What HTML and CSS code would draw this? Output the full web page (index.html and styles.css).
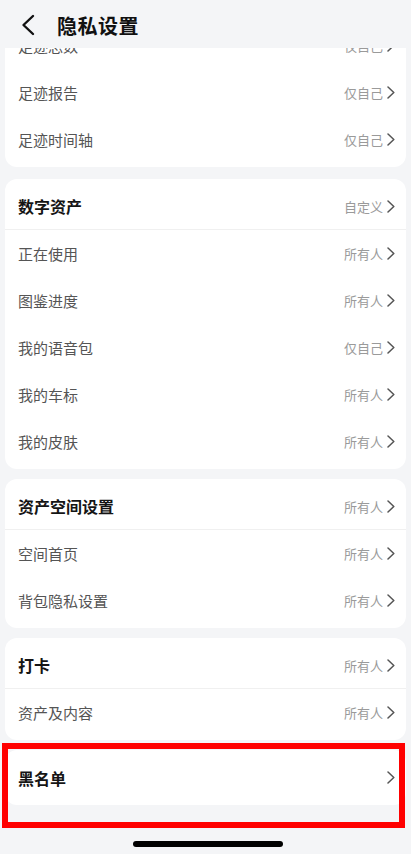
FILE: index.html
```html
<!DOCTYPE html>
<html lang="zh-CN">

<head>
  <meta charset="UTF-8">
  <meta name="viewport" content="width=device-width, initial-scale=1.0">
  <title>隐私设置</title>
  <link rel="stylesheet" href="styles.css">
</head>

<body>

  <header class="topbar">
    <svg class="back" width="16" height="22" viewBox="0 0 16 22">
      <path d="M13 2 L3.5 11 L13 20" fill="none" stroke="#111" stroke-width="2.4" stroke-linecap="round" stroke-linejoin="round"/>
    </svg>
    <h1>隐私设置</h1>
  </header>

  <main class="content">
    <section class="card first">
      <div class="row"><span class="label">足迹总数</span><span class="value">仅自己</span><svg class="arrow" viewBox="0 0 8 13"><path d="M1 1 L6.8 6.5 L1 12"/></svg></div>
      <div class="row"><span class="label">足迹报告</span><span class="value">仅自己</span><svg class="arrow" viewBox="0 0 8 13"><path d="M1 1 L6.8 6.5 L1 12"/></svg></div>
      <div class="row"><span class="label">足迹时间轴</span><span class="value">仅自己</span><svg class="arrow" viewBox="0 0 8 13"><path d="M1 1 L6.8 6.5 L1 12"/></svg></div>
    </section>

    <section class="card">
      <div class="row head"><span class="label">数字资产</span><span class="value">自定义</span><svg class="arrow" viewBox="0 0 8 13"><path d="M1 1 L6.8 6.5 L1 12"/></svg></div>
      <div class="row"><span class="label">正在使用</span><span class="value">所有人</span><svg class="arrow" viewBox="0 0 8 13"><path d="M1 1 L6.8 6.5 L1 12"/></svg></div>
      <div class="row"><span class="label">图鉴进度</span><span class="value">所有人</span><svg class="arrow" viewBox="0 0 8 13"><path d="M1 1 L6.8 6.5 L1 12"/></svg></div>
      <div class="row"><span class="label">我的语音包</span><span class="value">仅自己</span><svg class="arrow" viewBox="0 0 8 13"><path d="M1 1 L6.8 6.5 L1 12"/></svg></div>
      <div class="row"><span class="label">我的车标</span><span class="value">所有人</span><svg class="arrow" viewBox="0 0 8 13"><path d="M1 1 L6.8 6.5 L1 12"/></svg></div>
      <div class="row"><span class="label">我的皮肤</span><span class="value">所有人</span><svg class="arrow" viewBox="0 0 8 13"><path d="M1 1 L6.8 6.5 L1 12"/></svg></div>
    </section>

    <section class="card">
      <div class="row head"><span class="label">资产空间设置</span><span class="value">所有人</span><svg class="arrow" viewBox="0 0 8 13"><path d="M1 1 L6.8 6.5 L1 12"/></svg></div>
      <div class="row"><span class="label">空间首页</span><span class="value">所有人</span><svg class="arrow" viewBox="0 0 8 13"><path d="M1 1 L6.8 6.5 L1 12"/></svg></div>
      <div class="row"><span class="label">背包隐私设置</span><span class="value">所有人</span><svg class="arrow" viewBox="0 0 8 13"><path d="M1 1 L6.8 6.5 L1 12"/></svg></div>
    </section>

    <section class="card">
      <div class="row head"><span class="label">打卡</span><span class="value">所有人</span><svg class="arrow" viewBox="0 0 8 13"><path d="M1 1 L6.8 6.5 L1 12"/></svg></div>
      <div class="row"><span class="label">资产及内容</span><span class="value">所有人</span><svg class="arrow" viewBox="0 0 8 13"><path d="M1 1 L6.8 6.5 L1 12"/></svg></div>
    </section>

    <section class="card marked">
      <div class="row head"><span class="label">黑名单</span><svg class="arrow" viewBox="0 0 8 13"><path d="M1 1 L6.8 6.5 L1 12"/></svg></div>
    </section>
  </main>

  <div class="home-bar"></div>

</body>

</html>
```

FILE: styles.css
```css
* {
  box-sizing: border-box;
  margin: 0;
  padding: 0;
  font-family: "Noto Sans CJK SC", "Noto Sans", sans-serif;
}

body {
  background: #f4f5f7;
  width: 411px;
  height: 854px;
  overflow: hidden;
  position: relative;
}

.topbar {
  position: absolute;
  top: 0;
  left: 0;
  width: 100%;
  height: 48px;
  background: #f4f5f7;
  display: flex;
  align-items: center;
  padding: 2px 0 0 20px;
  z-index: 2;
}

.topbar .back {
  margin-right: 21px;
}

.topbar h1 {
  font-size: 20px;
  font-weight: 700;
  color: #111;
  letter-spacing: 0.5px;
}

.content {
  padding: 18px 5px 0;
  display: flex;
  flex-direction: column;
  gap: 10px;
}

.card {
  background: #fff;
  border-radius: 12px;
  padding: 4px 0;
}

.card.first {
  margin-bottom: 2px;
}

.row {
  height: 47px;
  display: flex;
  align-items: center;
  padding: 0 11px 0 13px;
}

.row .label {
  flex: 1;
  font-size: 15px;
  color: #555;
}

.row .value {
  font-size: 13px;
  color: #9a9a9a;
  margin-right: 4px;
}

.row.head {
  border-bottom: 1px solid #f0f0f0;
}

.row.head .label {
  font-size: 16px;
  font-weight: 700;
  color: #151515;
}

.card .row.head:last-child {
  border-bottom: none;
}

.arrow {
  width: 8px;
  height: 13px;
  fill: none;
  stroke: #555;
  stroke-width: 1.5;
  stroke-linecap: round;
  stroke-linejoin: round;
}

.marked {
  position: relative;
}

.marked::after {
  content: "";
  position: absolute;
  top: -7px;
  left: -3px;
  right: 1px;
  bottom: -23px;
  border: 6px solid #f00;
}

.home-bar {
  position: absolute;
  left: 133px;
  top: 841px;
  width: 150px;
  height: 6px;
  border-radius: 3px;
  background: #000;
}
```
